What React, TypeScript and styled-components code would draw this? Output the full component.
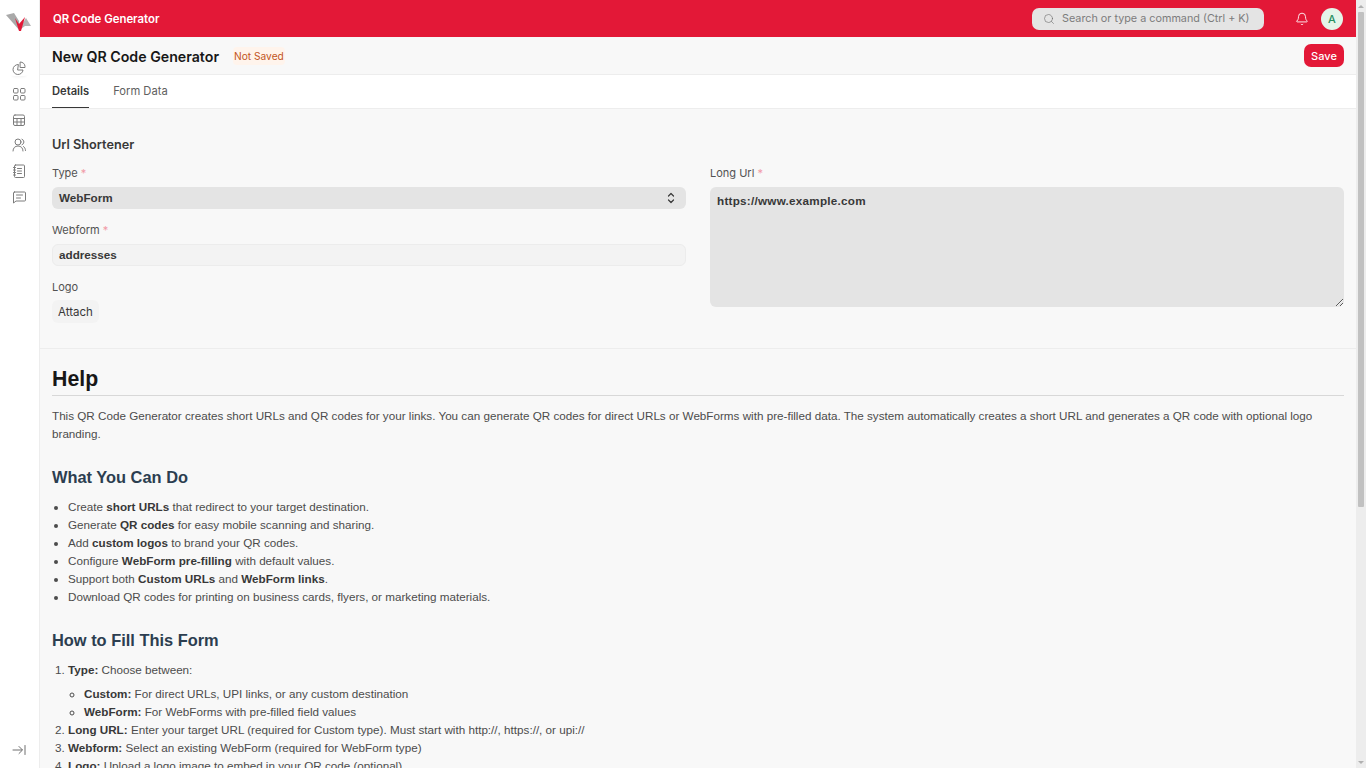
import styled, { createGlobalStyle } from "styled-components";
import { Bell, Search } from "lucide-react";

const GlobalStyle = createGlobalStyle`
  html, body {
    overflow: hidden;
  }
  body {
    margin: 0;
    background: #f8f8f8;
    color: #383838;
    font-family: Inter, "Liberation Sans", sans-serif;
    font-size: 11px;
    line-height: 18px;
  }
`;

const Shell = styled.div`
  display: flex;
  height: 100vh;
  overflow: hidden;
`;

const Sidebar = styled.aside`
  flex: 0 0 40px;
  box-sizing: border-box;
  background: #fff;
  border-right: 1px solid #ededed;
  display: flex;
  flex-direction: column;
  align-items: center;
  padding: 12px 1px 0 0;
`;

const NavList = styled.nav`
  display: flex;
  flex-direction: column;
  align-items: center;
  gap: 9.8px;
  margin-top: 28px;
  color: #7c7c7c;
`;

const NavIcon = styled.svg`
  display: block;
  width: 16px;
  height: 16px;
  fill: none;
  stroke: currentColor;
  stroke-width: 1;
  stroke-linecap: round;
  stroke-linejoin: round;
`;

const ActiveMark = styled.div`
  border-radius: 6px;
  padding: 0 3px;
  box-shadow: 0 5px 3px -4px rgba(0, 0, 0, 0.06);
`;

const Collapse = styled.div`
  margin-top: auto;
  margin-bottom: 10px;
  color: #6e6e6e;
  height: 16px;
`;

const Main = styled.main`
  flex: 1;
  min-width: 0;
`;

const ScrollRail = styled.div`
  flex: 0 0 10px;
  background: #ededed;
  display: flex;
  flex-direction: column;
  align-items: center;
`;

const ScrollArrow = styled.div<{ $down?: boolean }>`
  flex: 0 0 12px;
  display: flex;
  align-items: center;
  justify-content: center;

  &::before {
    content: "";
    border-left: 3px solid transparent;
    border-right: 3px solid transparent;
    border-${(p) => (p.$down ? "top" : "bottom")}: 3px solid #b0b0b0;
  }
`;

const ScrollThumb = styled.div`
  width: 6px;
  height: 495px;
  margin-bottom: auto;
  background: #c1c1c1;
  border-radius: 1px;
`;

const TopBar = styled.header`
  height: 37px;
  background: #e31837;
  display: flex;
  align-items: center;
  padding: 0 13px;
  color: #fff;
`;

const AppTitle = styled.div`
  font-size: 11.4px;
  font-weight: 600;
  flex: 1;
`;

const SearchBox = styled.div`
  width: 232px;
  height: 22px;
  box-sizing: border-box;
  background: #e4e4e4;
  border-radius: 7px;
  display: flex;
  align-items: center;
  gap: 7px;
  padding-left: 11px;
  color: #7c7c7c;
  font-size: 10.8px;
  white-space: nowrap;
`;

const BellButton = styled.div`
  display: flex;
  margin-left: 31px;
`;

const Avatar = styled.div`
  width: 22px;
  height: 22px;
  margin-left: 12px;
  border-radius: 50%;
  background: #e4f5e9;
  color: #278f5e;
  font-size: 11px;
  font-weight: 500;
  display: flex;
  align-items: center;
  justify-content: center;
`;

const PageHead = styled.div`
  height: 37px;
  display: flex;
  align-items: center;
  justify-content: space-between;
  padding: 0 12px;
  border-bottom: 1px solid #ededed;
`;

const TitleGroup = styled.div`
  display: flex;
  align-items: center;
`;

const PageTitle = styled.h1`
  margin: 0;
  font-size: 14.2px;
  font-weight: 600;
  color: #171717;
  line-height: 22px;
  padding-top: 2px;
`;

const StatusPill = styled.span`
  margin-left: 14px;
  font-size: 10.2px;
  color: #c2541c;
  background: #fff4ec;
  border-radius: 4px;
  padding: 0 1px;
`;

const SaveButton = styled.button`
  height: 23px;
  width: 40px;
  padding: 0;
  border: 0;
  border-radius: 7px;
  background: #e31837;
  color: #fff;
  font: 500 11px Inter, sans-serif;
`;

const Tabs = styled.div`
  height: 33px;
  background: #fff;
  display: flex;
  gap: 24px;
  padding: 0 12px;
  border-bottom: 1px solid #ededed;
`;

const Tab = styled.div<{ $active?: boolean }>`
  display: flex;
  align-items: center;
  padding-bottom: 1px;
  font-size: 11.2px;
  font-weight: ${(p) => (p.$active ? 600 : 400)};
  color: ${(p) => (p.$active ? "#383838" : "#606060")};
  box-shadow: ${(p) => (p.$active ? "inset 0 -1px 0 #383838" : "none")};
`;

const FormSection = styled.section`
  padding: 26px 12px 25px;
  border-bottom: 1px solid #ededed;
`;

const SectionTitle = styled.h2`
  margin: 0 0 9px;
  font-size: 12.7px;
  font-weight: 600;
  line-height: 20px;
  color: #383838;
`;

const Columns = styled.div`
  display: grid;
  grid-template-columns: 1fr 1fr;
  gap: 24px;
`;

const Field = styled.div`
  margin-bottom: 12px;
`;

const Label = styled.label<{ $tight?: boolean }>`
  display: block;
  font-size: 11px;
  line-height: 18px;
  color: #525252;
  margin-bottom: ${(p) => (p.$tight ? "4px" : "5px")};
`;

const Required = styled.span`
  color: #f19aa6;
`;

const SelectBox = styled.div`
  height: 22px;
  box-sizing: border-box;
  border-radius: 6px;
  background: #e4e4e4;
  display: flex;
  align-items: center;
  justify-content: space-between;
  padding: 0 11px 1px 7px;
  font: 700 11.7px "Liberation Sans", sans-serif;
  color: #383838;
`;

const InputBox = styled.div`
  height: 22px;
  box-sizing: border-box;
  border-radius: 6px;
  background: #f3f3f3;
  border: 1px solid #ececec;
  display: flex;
  align-items: center;
  padding: 0 6px 1px;
  font: 700 11.7px "Liberation Sans", sans-serif;
  color: #383838;
`;

const AttachButton = styled.div`
  display: flex;
  width: max-content;
  align-items: center;
  height: 23px;
  padding: 0 6px;
  border-radius: 6px;
  background: #f3f3f3;
  font-size: 11.5px;
  color: #383838;
`;

const LongUrl = styled.textarea`
  display: block;
  width: 100%;
  height: 120px;
  box-sizing: border-box;
  border: 0;
  outline: 0;
  border-radius: 6px;
  background: #e4e4e4;
  padding: 5px 7px;
  font: 700 11.7px/18px "Liberation Sans", sans-serif;
  letter-spacing: 0.25px;
  color: #383838;
`;

const HelpBody = styled.section`
  padding: 16px 12px 40px;
  font-family: "Liberation Sans", sans-serif;
  font-size: 11.68px;
  line-height: 18px;
  color: #4c4c4c;

  b {
    color: #383838;
  }
`;

const HelpTitle = styled.h1`
  margin: 0 0 11px;
  padding-bottom: 2px;
  border-bottom: 1px solid #d8d8d8;
  font-size: 21.3px;
  line-height: 28px;
  font-weight: 700;
  color: #171717;
`;

const Paragraph = styled.p`
  margin: 0 0 22px;
`;

const HelpHeading = styled.h2`
  margin: 0 0 9px;
  font-size: 16.4px;
  line-height: 24px;
  font-weight: 700;
  color: #2c3e50;
`;

const HelpList = styled.ul`
  margin: 0 0 22px;
  padding-left: 16px;
`;

const StepList = styled.ol`
  margin: 0;
  padding-left: 16px;
`;

const SubList = styled.ul`
  list-style: circle;
  margin: 6px 0 0;
  padding-left: 16px;
`;

const Brand = () => (
  <svg width="26" height="20" viewBox="0 0 26 20">
    <path d="M0 3l8-2 5 8 1 10-7-8z" fill="#a9a9a9" />
    <path d="M25 14l-5-8-4 6-1 5 4-3z" fill="#b4b4b4" />
    <path d="M9 6l4 6 6-7-4 14h-2z" fill="#e31837" />
  </svg>
);

const Chevrons = () => (
  <svg width="8" height="12" viewBox="0 0 8 12" fill="none" stroke="#383838" strokeWidth="1.2" strokeLinecap="round" strokeLinejoin="round">
    <path d="M1.5 4L4 1.5 6.5 4" />
    <path d="M1.5 8L4 10.5 6.5 8" />
  </svg>
);

export default function App() {
  return (
    <Shell>
      <GlobalStyle />
      <Sidebar>
        <Brand />
        <NavList>
          <ActiveMark>
            <NavIcon viewBox="0 0 16 16">
              <path d="M7 4.5a5 5 0 1 0 5 5.5H7z" />
              <path d="M9.5 2a4.5 4.5 0 0 1 4.5 4.5v1H9.5z" />
            </NavIcon>
          </ActiveMark>
          <NavIcon viewBox="0 0 16 16">
            <rect x="2.5" y="2.5" width="4.5" height="4.5" rx="1" />
            <rect x="9.5" y="2.5" width="4.5" height="4.5" rx="1" />
            <rect x="2.5" y="9.5" width="4.5" height="4.5" rx="1" />
            <rect x="9.5" y="9.5" width="4.5" height="4.5" rx="1" />
          </NavIcon>
          <NavIcon viewBox="0 0 16 16">
            <rect x="2.5" y="3" width="11" height="10.5" rx="1.5" />
            <path d="M2.5 6.5h11M2.5 10h11M6 6.5v7M10 6.5v7" />
          </NavIcon>
          <NavIcon viewBox="0 0 16 16">
            <circle cx="7" cy="5" r="3" />
            <path d="M2 14c0-3 2-5 5-5s5 2 5 5M11 2.2a3 3 0 0 1 0 5.6M12.5 9.5c1.2.8 2 2.4 2 4" />
          </NavIcon>
          <NavIcon viewBox="0 0 16 16">
            <rect x="3.5" y="2" width="10" height="12.5" rx="1" />
            <path d="M6.5 5.5h4M6.5 8h4M6.5 10.5h4M2.5 4.5h2M2.5 7h2M2.5 9.5h2M2.5 12h2" />
          </NavIcon>
          <NavIcon viewBox="0 0 16 16">
            <path d="M3.5 3h10a1 1 0 0 1 1 1v7a1 1 0 0 1-1 1H5l-2.5 2V4a1 1 0 0 1 1-1z" />
            <path d="M5.5 6h6M5.5 9h4" />
          </NavIcon>
        </NavList>
        <Collapse>
          <NavIcon viewBox="0 0 16 16">
            <path d="M2 8h9M8 4.5L11.5 8 8 11.5M14 3.5v9" />
          </NavIcon>
        </Collapse>
      </Sidebar>
      <Main>
        <TopBar>
          <AppTitle>QR Code Generator</AppTitle>
          <SearchBox>
            <Search size={12} strokeWidth={1.2} color="#6a6a6a" />
            Search or type a command (Ctrl + K)
          </SearchBox>
          <BellButton>
            <Bell size={14} strokeWidth={1.5} />
          </BellButton>
          <Avatar>A</Avatar>
        </TopBar>
        <PageHead>
          <TitleGroup>
            <PageTitle>New QR Code Generator</PageTitle>
            <StatusPill>Not Saved</StatusPill>
          </TitleGroup>
          <SaveButton>Save</SaveButton>
        </PageHead>
        <Tabs>
          <Tab $active>Details</Tab>
          <Tab>Form Data</Tab>
        </Tabs>
        <FormSection>
          <SectionTitle>Url Shortener</SectionTitle>
          <Columns>
            <div>
              <Field>
                <Label>Type <Required>*</Required></Label>
                <SelectBox>WebForm<Chevrons /></SelectBox>
              </Field>
              <Field>
                <Label>Webform <Required>*</Required></Label>
                <InputBox>addresses</InputBox>
              </Field>
              <Label $tight>Logo</Label>
              <AttachButton>Attach</AttachButton>
            </div>
            <div>
              <Label>Long Url <Required>*</Required></Label>
              <LongUrl defaultValue="https://www.example.com" />
            </div>
          </Columns>
        </FormSection>
        <HelpBody>
          <HelpTitle>Help</HelpTitle>
          <Paragraph>
            This QR Code Generator creates short URLs and QR codes for your links. You can generate QR codes for direct URLs or WebForms with pre-filled data. The system automatically creates a short URL and generates a QR code with optional logo branding.
          </Paragraph>
          <HelpHeading>What You Can Do</HelpHeading>
          <HelpList>
            <li>Create <b>short URLs</b> that redirect to your target destination.</li>
            <li>Generate <b>QR codes</b> for easy mobile scanning and sharing.</li>
            <li>Add <b>custom logos</b> to brand your QR codes.</li>
            <li>Configure <b>WebForm pre-filling</b> with default values.</li>
            <li>Support both <b>Custom URLs</b> and <b>WebForm links</b>.</li>
            <li>Download QR codes for printing on business cards, flyers, or marketing materials.</li>
          </HelpList>
          <HelpHeading>How to Fill This Form</HelpHeading>
          <StepList>
            <li>
              <b>Type:</b> Choose between:
              <SubList>
                <li><b>Custom:</b> For direct URLs, UPI links, or any custom destination</li>
                <li><b>WebForm:</b> For WebForms with pre-filled field values</li>
              </SubList>
            </li>
            <li><b>Long URL:</b> Enter your target URL (required for Custom type). Must start with http://, https://, or upi://</li>
            <li><b>Webform:</b> Select an existing WebForm (required for WebForm type)</li>
            <li><b>Logo:</b> Upload a logo image to embed in your QR code (optional)</li>
          </StepList>
        </HelpBody>
      </Main>
      <ScrollRail>
        <ScrollArrow />
        <ScrollThumb />
        <ScrollArrow $down />
      </ScrollRail>
    </Shell>
  );
}
